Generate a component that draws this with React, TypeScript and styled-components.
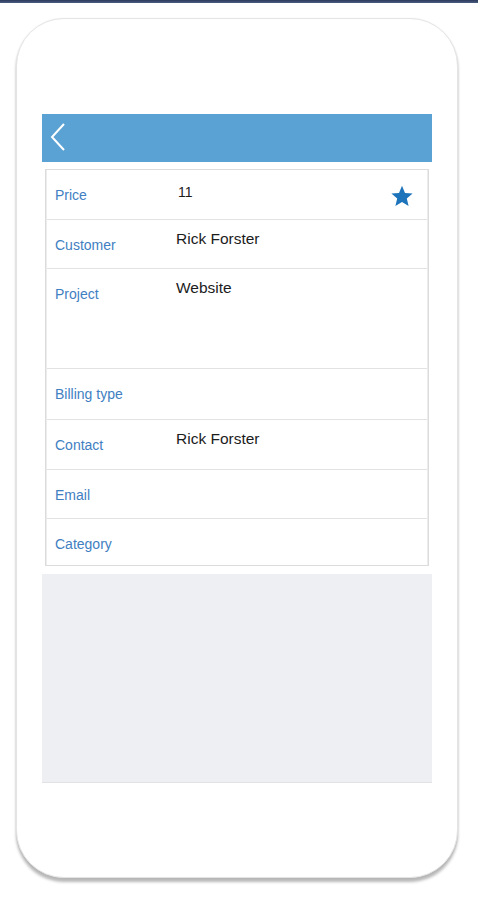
import React from 'react';
import styled, { createGlobalStyle } from 'styled-components';

interface Field {
    label: string;
    value?: string;
    height: number;
    small?: boolean;
    starred?: boolean;
}

const FIELDS: Field[] = [
    { label: 'Price', value: '11', height: 50, small: true, starred: true },
    { label: 'Customer', value: 'Rick Forster', height: 49 },
    { label: 'Project', value: 'Website', height: 100 },
    { label: 'Billing type', height: 51 },
    { label: 'Contact', value: 'Rick Forster', height: 50 },
    { label: 'Email', height: 49 },
    { label: 'Category', height: 46 },
];

const BackIcon = () => (
    <svg width="16" height="30" viewBox="0 0 16 30">
        <polyline points="14,2 2,15 14,28" fill="none" stroke="#ffffff" strokeWidth="2" />
    </svg>
);

const StarIcon = () => (
    <svg width="24" height="24" viewBox="0 0 24 24">
        <path
            d="M12 1.8l3 7.1 7.6.6-5.8 5 1.8 7.5L12 18l-6.6 4 1.8-7.5-5.8-5 7.6-.6z"
            fill="#1d74bb"
        />
    </svg>
);

export default function App() {
    return (
        <>
            <GlobalStyle />
            <TopBar />
            <Stage>
                <Phone>
                    <Screen>
                        <Header>
                            <BackButton aria-label="Back">
                                <BackIcon />
                            </BackButton>
                        </Header>
                        <DetailArea>
                            <Card>
                                {FIELDS.map((f) => (
                                    <Row key={f.label} $height={f.height}>
                                        <Label>{f.label}</Label>
                                        <Value $small={f.small}>{f.value}</Value>
                                        {f.starred ? (
                                            <StarSlot>
                                                <StarIcon />
                                            </StarSlot>
                                        ) : null}
                                    </Row>
                                ))}
                            </Card>
                        </DetailArea>
                        <EmptyArea />
                    </Screen>
                </Phone>
            </Stage>
        </>
    );
}

const GlobalStyle = createGlobalStyle`
    body {
        margin: 0;
        background: #ffffff;
        font-family: "Liberation Sans", Arial, sans-serif;
    }
`;

const TopBar = styled.div`
    height: 3px;
    background: linear-gradient(180deg, #2b3a5c 0%, #4a5d80 100%);
`;

const Stage = styled.div`
    padding: 15px 20px 20px 16px;
`;

const Phone = styled.div`
    box-sizing: border-box;
    width: 442px;
    height: 860px;
    border: 1px solid #e4e4e4;
    border-radius: 48px;
    background: #ffffff;
    box-shadow: 0 4px 3px rgba(0, 0, 0, 0.28), 0 0 2px rgba(0, 0, 0, 0.06);
    padding: 95px 25px 0 25px;
`;

const Screen = styled.div`
    width: 390px;
    display: flex;
    flex-direction: column;
`;

const Header = styled.div`
    height: 48px;
    background: #5ba2d4;
    display: flex;
    align-items: center;
    padding-left: 8px;
`;

const BackButton = styled.div`
    display: flex;
    margin-top: -2px;
`;

const DetailArea = styled.div`
    background: #ffffff;
    padding: 7px 3px 8px 3px;
`;

const Card = styled.div`
    border: 1px solid #dcdcdc;
    box-shadow: inset 1px 0 0 #ececec, inset -1px 0 0 #ececec;
`;

const Row = styled.div<{ $height: number }>`
    height: ${({ $height }) => $height}px;
    box-sizing: border-box;
    display: grid;
    grid-template-columns: 121px 1fr 50px;
    padding-left: 8px;
    margin: 0 1px;
    border-bottom: 1px solid #e2e2e2;
    &:last-child {
        border-bottom: none;
    }
`;

const Label = styled.div`
    font-size: 14px;
    line-height: 16px;
    color: #3f80c2;
    padding-top: 17px;
`;

const Value = styled.div<{ $small?: boolean }>`
    font-size: ${({ $small }) => ($small ? '14px' : '15.5px')};
    line-height: 18px;
    color: #1c1c1c;
    padding-top: ${({ $small }) => ($small ? '13px' : '10px')};
    padding-left: ${({ $small }) => ($small ? '2px' : '0')};
`;

const StarSlot = styled.div`
    display: flex;
    justify-content: center;
    padding-top: 14px;
`;

const EmptyArea = styled.div`
    height: 208px;
    background: #eeeff3;
    border-bottom: 1px solid #e2e2e6;
`;
